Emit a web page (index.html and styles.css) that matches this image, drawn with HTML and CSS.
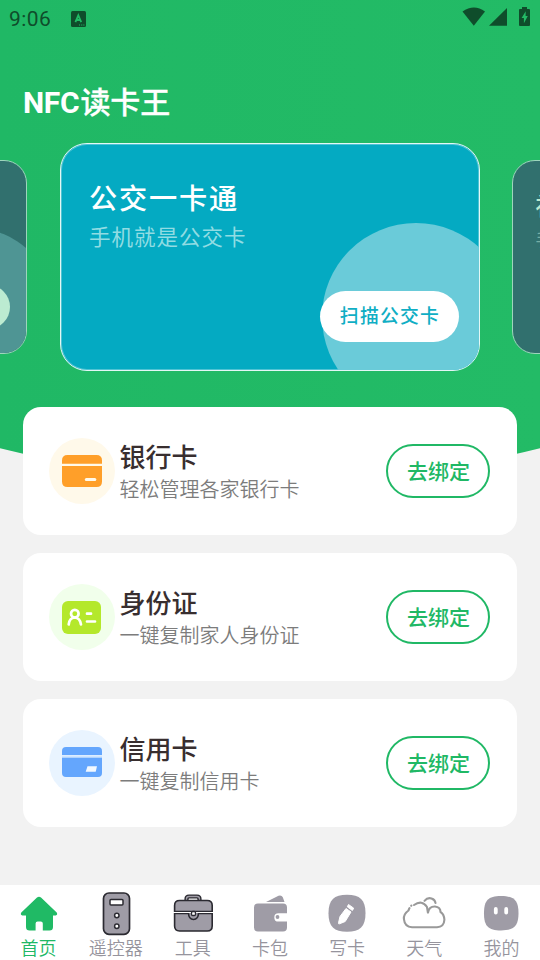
FILE: index.html
```html
<!DOCTYPE html>
<html lang="zh-CN">
<head>
<meta charset="utf-8">
<title>NFC读卡王</title>
<link rel="stylesheet" href="styles.css">
</head>
<body>
<div class="app">
  <div class="hero-bg"></div>
  <header class="status">
    <span class="time">9:06</span>
    <svg class="notif" width="15" height="16" viewBox="0 0 15 16"><rect width="15" height="16" rx="1.5" fill="#0f4d2b"/><path d="M4.400 11.200 7.300 4.300l2.900 6.900M5.500 9h3.700" fill="none" stroke="#20ba65" stroke-width="1.800"/><path d="M8 14h1.100M10.200 14h1.100M12.300 14h1.100" stroke="#20ba65" stroke-width="1"/></svg>
    <svg class="signals" width="70" height="22" viewBox="0 0 70 22" fill="#0f4d2b"><path d="M0.500 4.500Q12-3.600 23 4.500L11.800 18.700Z"/><path d="M27 18.800 45 1v17.800Z"/><path fill-rule="evenodd" d="M57 3q0-1 1-1h2V0h5v2h2q1 0 1 1v15q0 1-1 1H58q-1 0-1-1ZM63.700 4.300 59.600 11h2.300v5.200L65.800 9h-2.200Z"/></svg>
  </header>
  <h1>NFC<span>读卡王</span></h1>

  <section class="carousel">
    <article class="slide side"><div class="bubble"></div><span class="scan"></span></article>
    <article class="slide main">
      <h2>公交一卡通</h2>
      <p>手机就是公交卡</p>
      <div class="bubble"></div>
      <span class="scan">扫描公交卡</span>
    </article>
    <article class="slide side next"><h2>社保卡</h2><p>手机就是社保卡</p></article>
  </section>

  <main class="cards">
    <article class="card">
      <span class="badge bank"><svg width="40" height="32" viewBox="0 0 40 32"><path d="M0 8.700V5.500Q0 0 5.500 0h29Q40 0 40 5.500v3.200ZM0 11h40v15.500Q40 32 34.500 32h-29Q0 32 0 26.500Z" fill="#ff9f29"/><path d="M24.300 24.500h8.500" stroke="#fff9ea" stroke-width="3" stroke-linecap="round"/></svg></span>
      <div class="info"><h3>银行卡</h3><p>轻松管理各家银行卡</p></div>
      <button>去绑定</button>
    </article>
    <article class="card">
      <span class="badge ident"><svg width="39" height="33" viewBox="0 0 39 33"><rect width="39" height="33" rx="6" fill="#b4e82b"/><g fill="none" stroke="#fff" stroke-width="2.700" stroke-linecap="round"><circle cx="12.800" cy="12.700" r="3.800"/><path d="M6.700 23.500q.7-6.700 6-7 5.300.3 6.300 7M25 12.700h4M25 20.500h8"/></g></svg></span>
      <div class="info"><h3>身份证</h3><p>一键复制家人身份证</p></div>
      <button>去绑定</button>
    </article>
    <article class="card">
      <span class="badge credit"><svg width="40" height="30" viewBox="0 0 40 30"><path d="M0 8V4Q0 0 4 0h32q4 0 4 4v4ZM0 10.600h40V26q0 4-4 4H4q-4 0-4-4Z" fill="#64a6fd"/><path d="M0 9.300h40" stroke="#cfe5ff" stroke-width="1.800"/><path d="M25.500 19.200h9.500l-1.300 5.600h-10Z" fill="#f2f8ff"/></svg></span>
      <div class="info"><h3>信用卡</h3><p>一键复制信用卡</p></div>
      <button>去绑定</button>
    </article>
  </main>

  <nav class="tabs">
    <a class="active"><svg viewBox="0 0 44 44"><path d="M4.300 20.500 20 5.500q2-1.700 4 0l15.700 15q1.300 2.300-1 3H36V35q0 3.500-3.500 3.500h-6.700V31.500q0-2-2-2h-3.200q-2 0-2 2v7h-6Q9 38.500 9 35V23.500H5.300q-2.300-.7-1-3Z" fill="#20ba65"/></svg>首页</a>
    <a><svg viewBox="0 0 44 44"><rect x="9.500" y="1" width="26" height="41.300" rx="5.500" fill="#9f9ca6" stroke="#2b2a31" stroke-width="1.700"/><g fill="#fff" stroke="#2b2a31" stroke-width="1.500"><rect x="16" y="7.500" width="13" height="5.500" rx="1"/><circle cx="22.800" cy="23.500" r="2.200"/><circle cx="22.800" cy="34.300" r="2.200"/></g></svg>遥控器</a>
    <a><svg viewBox="0 0 44 44"><path d="M15.500 9V7q0-2.500 2.500-2.500h8q2.500 0 2.500 2.500v2" fill="none" stroke="#2b2a31" stroke-width="4.200"/><path d="M15.500 9V7q0-2.500 2.500-2.500h8q2.500 0 2.500 2.500v2" fill="none" stroke="#9f9ca6" stroke-width="1.400"/><path d="M3.600 19.500V13.500q0-5 5-5h27.600q5 0 5 5v6ZM3.600 21.500h37.600v12.500q0 5-5 5H8.600q-5 0-5-5Z" fill="#9f9ca6" stroke="#2b2a31" stroke-width="1.600"/><path d="M17.500 21q.2 6.500 5 6.500t5-6.500" fill="#9f9ca6" stroke="#2b2a31" stroke-width="1.600"/><path d="M2 20.500h40" stroke="#fff" stroke-width="1"/><rect x="20.500" y="19.500" width="4" height="4" rx="1.200" fill="#fff" stroke="#2b2a31" stroke-width="1.300"/></svg>工具</a>
    <a><svg viewBox="0 0 44 44"><path d="M18 10 30.500 3.700q3-1 4.300 1.500L36.500 10ZM6 15.500q0-4 4-4h25q4 0 4 4v5.700h-8.500q-4.200 0-4.200 4.200t4.200 4.200H39v6q0 4-4 4H10q-4 0-4-4Z" fill="#9f9ca6"/><circle cx="29.500" cy="25" r="1.900" fill="#9f9ca6"/></svg>卡包</a>
    <a><svg viewBox="0 0 44 44"><path d="M22 2.800c13 0 18.500 5 18.500 18.500s-5.500 18.500-18.500 18.500S3.500 34.800 3.500 21.300 9 2.800 22 2.800Z" fill="#9f9ca6"/><path d="m21 16.500 5 3.500-5.800 9.500-5.700 2.300q-1.300.3-1-1l1.500-6.300ZM23.500 12.500l5.200 3.700-1.300 2.300-5.100-3.700Z" fill="#fff" stroke="#fff" stroke-width="1" stroke-linejoin="round"/></svg>写卡</a>
    <a><svg viewBox="0 0 44 44"><g fill="none" stroke="#999" stroke-width="2.100" stroke-linecap="round" stroke-linejoin="round"><path d="M6.500 18.500Q1.500 22 1.900 27 2.700 35 10 35.300h25q7-.3 7.400-7.500Q42 22 38.500 20 38.500 15 33 14.500q-6-.2-7 6M12 13q8-5.500 13 2l.9 5.500M22.500 8.800q3-3.600 7-2.400 3.700 1.200 4 4.600M6.500 18.500q.3-1.300 1-2.300M9.200 13.800l.2-.2"/></g></svg>天气</a>
    <a><svg viewBox="0 0 44 44"><path d="M22 4c13 0 17.500 4.500 17.500 17.200S35 38.400 22 38.400 5 33.900 5 21.200 9 4 22 4Z" fill="#9f9ca6"/><path d="M16.800 17v3.500M27.200 17v3.500" stroke="#fff" stroke-width="3.800" stroke-linecap="round"/></svg>我的</a>
  </nav>
</div>
</body>
</html>
```
FILE: styles.css
```css
* { box-sizing: border-box; margin: 0; padding: 0; }
body { font-family: Roboto, "Noto Sans CJK SC", sans-serif; background: #f2f2f2; }
.app { position: relative; width: 540px; height: 960px; overflow: hidden; display: flex; flex-direction: column; isolation: isolate; }
.hero-bg { position: absolute; z-index: -1; inset: 0 0 auto; height: 482px; background: linear-gradient(90deg, #20b865, #23bb66); clip-path: circle(1113px at 50% -631.500px); }
.status { height: 37px; display: flex; align-items: center; padding: 0 8px 0 9px; color: #0f4d2b; }
.time { font-size: 21px; font-weight: 400; letter-spacing: .4px; width: 62px; line-height: 24px; }
.signals { margin-left: auto; margin-top: -1px; }
h1 { height: 106px; padding: 44px 23px 0; color: #fff; font-size: 30px; line-height: 44px; font-weight: 700; letter-spacing: -.3px; }
h1 span { font-weight: 500; letter-spacing: 0; -webkit-text-stroke: .3px #fff; margin-left: 1px; }
.carousel { height: 228px; padding-right: 1.500px; display: flex; align-items: center; justify-content: center; gap: 33px; }
.slide { position: relative; flex: none; overflow: hidden; color: #fff; border: 1px solid #e3f7f5; box-shadow: inset 0 0 0 1px rgba(255, 255, 255, .3); width: 420px; height: 228px; border-radius: 27px; background: #04aac2; padding: 33px 28px; }
.slide h2 { font-size: 28.200px; line-height: 46px; font-weight: 500; letter-spacing: 1.800px; white-space: nowrap; }
.slide p { color: #91dce3; font-size: 21.500px; line-height: 30px; letter-spacing: 1px; white-space: nowrap; }
.main { margin-right: -1.500px; }
.bubble { position: absolute; width: 188px; height: 188px; border-radius: 50%; left: 261px; top: 79px; background: #6acbd9; }
.scan { position: absolute; right: 20px; bottom: 28px; width: 139px; height: 51px; border-radius: 26px; background: #fff; color: #10aec4; font-size: 18.800px; font-weight: 500; letter-spacing: 1.300px; line-height: 53px; text-align: center; text-indent: 1px; }
.side { width: 357px; height: 194px; border-radius: 23px; border-color: #9dd5bc; box-shadow: none; background: #31706e; padding: 26px 23px; }
.side .bubble { width: 160px; height: 160px; left: 222px; top: 67px; background: #4f9594; }
.side .scan { width: 119px; height: 44px; bottom: 24px; right: 16px; background: #bcebd1; }
.side h2 { font-size: 24px; line-height: 40px; color: #bcebd1; }
.side p { font-size: 18px; line-height: 28px; color: #77aea5; }
.cards { flex: 1; padding: 36px 23px 0; display: flex; flex-direction: column; gap: 18px; }
.card { height: 128px; border-radius: 18px; background: #fff; display: flex; align-items: center; padding: 0 27px 0 26px; }
.badge { width: 66px; height: 66px; border-radius: 50%; display: grid; place-items: center; }
.bank { background: #fff9ea; }
.ident { background: #f1ffeb; }
.ident svg { margin-right: 1px; }
.credit { background: #e9f4ff; }
.credit svg { margin-bottom: 2px; }
.info { margin-left: 4.500px; flex: 1; padding-top: 6px; }
h3 { font-size: 26px; line-height: 32px; font-weight: 500; color: #382e2f; }
.info p { font-size: 20px; line-height: 32px; font-weight: 350; color: #7c7c7c; }
button { width: 104px; height: 54px; padding: 2px 0 0 1px; border: 2px solid #20b865; border-radius: 27px; background: #fff; color: #20b865; font: 500 21px/1 Roboto, "Noto Sans CJK SC", sans-serif; }
.tabs { height: 75px; background: #fff; display: grid; grid-template-columns: repeat(7, 1fr); padding-top: 7px; }
.tabs a { display: flex; flex-direction: column; align-items: center; color: #96949d; font-size: 18px; font-weight: 350; line-height: 25px; }
.tabs svg { width: 44px; height: 44px; }
.tabs .active { color: #20b865; }
```
